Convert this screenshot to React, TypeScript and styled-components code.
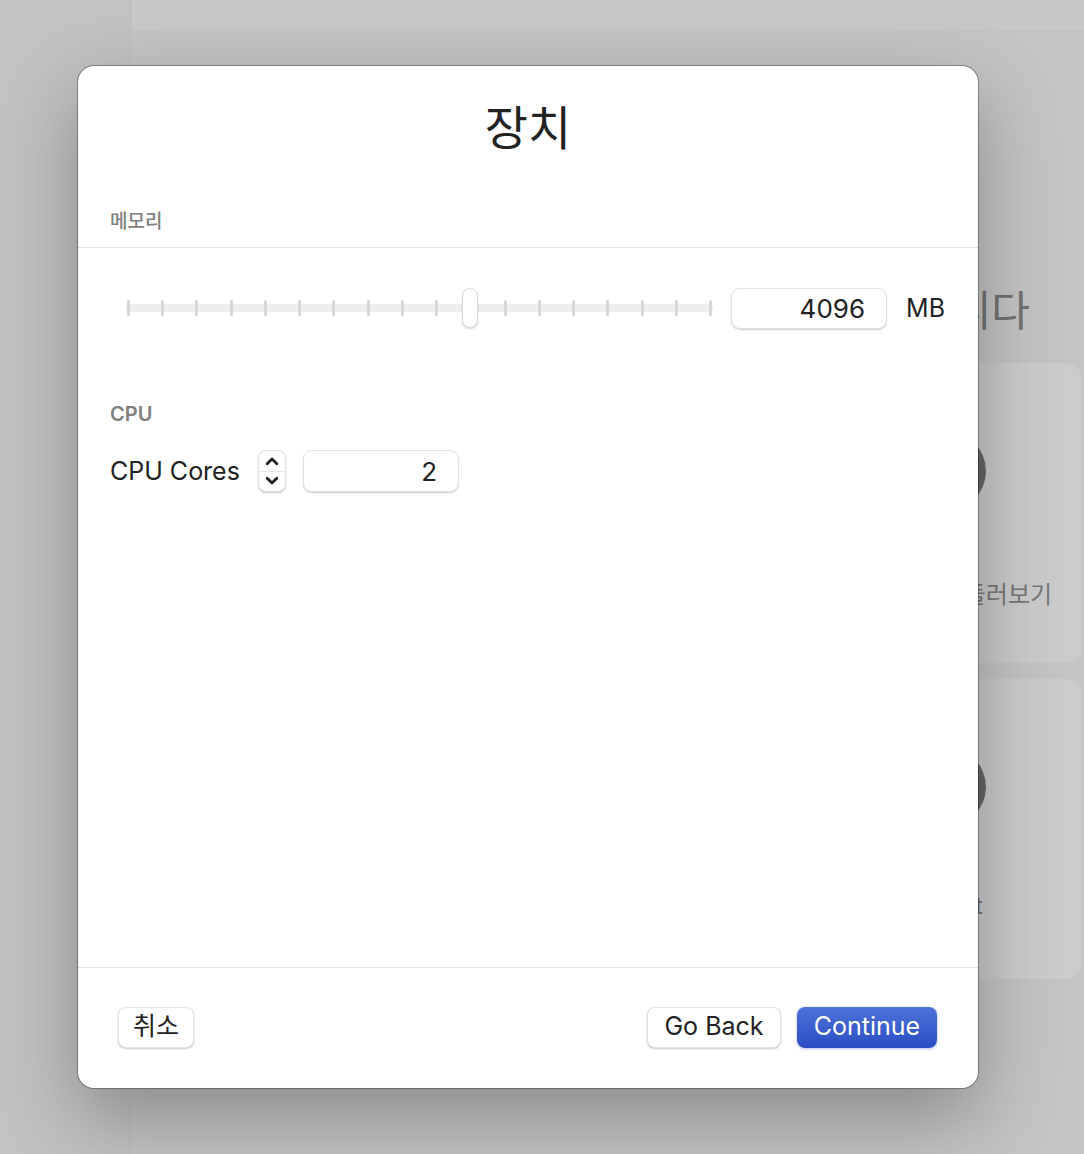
import React from "react";
import styled, { createGlobalStyle } from "styled-components";

const Global = createGlobalStyle`
  html, body { margin: 0; padding: 0; }
  body {
    width: 1084px;
    height: 1154px;
    overflow: hidden;
    font-family: Inter, "Noto Sans CJK KR", "Noto Sans", sans-serif;
    -webkit-font-smoothing: antialiased;
  }
`;

const Desktop = styled.div`
  position: relative;
  width: 1084px;
  height: 1154px;
  display: flex;
  background: #c4c4c4;
  overflow: hidden;
`;

const Sidebar = styled.div`
  width: 130px;
  flex: none;
  background: #c2c2c2;
  border-right: 1px solid #bdbcbe;
`;

const Main = styled.div`
  flex: 1;
  display: flex;
  flex-direction: column;
`;

const TopBar = styled.div`
  height: 30px;
  background: #c8c7c9;
  border-bottom: 1px solid #c2c1c3;
`;

const Content = styled.div`
  flex: 1;
  display: flex;
  flex-direction: column;
  align-items: flex-end;
  padding: 252px 2px 0 0;
`;

const BgHeading = styled.h1`
  margin: 0 52px 0 0;
  font-size: 42px;
  line-height: 56px;
  font-weight: 400;
  color: #727272;
  white-space: nowrap;
`;

const BgCards = styled.div`
  margin-top: 24px;
  display: flex;
  flex-direction: column;
  gap: 16px;
`;

const BgCard = styled.div`
  width: 272px;
  height: 300px;
  border-radius: 16px;
  background: #cbcbcb;
  display: flex;
  flex-direction: column;
  align-items: center;
  padding-top: 68px;
  box-sizing: border-box;
`;

const BgCircle = styled.div`
  width: 80px;
  height: 80px;
  border-radius: 50%;
  background: #676767;
`;

const BgLabel = styled.div`
  margin-top: 64px;
  font-size: 24px;
  color: #777;
  white-space: nowrap;
`;

const Dialog = styled.div`
  position: absolute;
  left: 78px;
  top: 66px;
  width: 900px;
  height: 1022px;
  box-sizing: border-box;
  background: #fff;
  border-radius: 16px;
  box-shadow: 0 0 0 1px rgba(0, 0, 0, 0.3), 0 30px 80px rgba(0, 0, 0, 0.3);
  display: flex;
  flex-direction: column;
  overflow: hidden;
`;

const Header = styled.div`
  padding: 34px 0 13px 32px;
  border-bottom: 1px solid #e1e1e1;
  display: flex;
  flex-direction: column;
`;

const Title = styled.h2`
  margin: 0 0 0 -32px;
  text-align: center;
  font-size: 47px;
  line-height: 56px;
  font-weight: 400;
  color: #222;
`;

const SectionLabel = styled.div<{ $top: number; $size: number; $weight: number }>`
  margin-top: ${(p) => p.$top}px;
  font-size: ${(p) => p.$size}px;
  line-height: 24px;
  font-weight: ${(p) => p.$weight};
  color: #808080;
`;

const Body = styled.div`
  flex: 1;
  padding: 39px 33px 0 32px;
  display: flex;
  flex-direction: column;
`;

const SliderRow = styled.div`
  display: flex;
  align-items: center;
  height: 42px;
`;

const Slider = styled.div`
  position: relative;
  width: 588px;
  height: 42px;
  margin-left: 16px;
  margin-right: 18px;
`;

const Track = styled.div`
  position: absolute;
  left: 0;
  right: 0;
  top: 17px;
  height: 8px;
  border-radius: 4px;
  background: #eeeeee;
`;

const Ticks = styled.div`
  position: absolute;
  left: 1px;
  right: 1px;
  top: 13px;
  display: flex;
  justify-content: space-between;
`;

const Tick = styled.div`
  width: 3px;
  height: 16px;
  border-radius: 2px;
  background: #d6d6d6;
`;

const Thumb = styled.div`
  position: absolute;
  top: 1px;
  width: 16px;
  height: 40px;
  margin-left: -8px;
  box-sizing: border-box;
  border-radius: 8px;
  background: #fff;
  border: 1px solid #dcdcdc;
  box-shadow: 0 1px 2px rgba(0, 0, 0, 0.18);
`;

const NumberField = styled.div<{ $h: number }>`
  width: 156px;
  height: ${(p) => p.$h}px;
  box-sizing: border-box;
  border-radius: 9px;
  border: 1px solid #e2e2e2;
  box-shadow: 0 1px 1.5px rgba(0, 0, 0, 0.2);
  background: #fff;
  display: flex;
  align-items: center;
  justify-content: flex-end;
  padding-right: 21px;
  font-size: 26px;
  color: #222;
`;

const Unit = styled.span`
  margin-left: 19px;
  font-size: 25px;
  color: #222;
`;

const CoresRow = styled.div`
  margin-top: 24px;
  display: flex;
  align-items: center;
  height: 42px;
`;

const FieldLabel = styled.span`
  font-size: 25px;
  color: #222;
  width: 148px;
`;

const Stepper = styled.div`
  width: 28px;
  height: 42px;
  box-sizing: border-box;
  border-radius: 8px;
  border: 1px solid #e0e0e0;
  box-shadow: 0 1px 1.5px rgba(0, 0, 0, 0.2);
  background: #fff;
  display: flex;
  flex-direction: column;
  margin-right: 17px;
`;

const StepHalf = styled.div<{ $top?: boolean }>`
  flex: 1;
  display: flex;
  align-items: center;
  justify-content: center;
  border-bottom: ${(p) => (p.$top ? "1px solid #e4e4e4" : "none")};
`;

const Footer = styled.div`
  height: 121px;
  border-top: 1px solid #e1e1e1;
  display: flex;
  align-items: flex-start;
  padding: 39px 41px 0 40px;
  box-sizing: border-box;
  gap: 16px;
`;

const Spacer = styled.div`
  flex: 1;
`;

const Button = styled.button<{ $primary?: boolean; $w: number }>`
  width: ${(p) => p.$w}px;
  height: 41px;
  border-radius: 8px;
  font-family: inherit;
  font-size: 25px;
  line-height: 1;
  padding: 0 0 2px;
  cursor: default;
  ${(p) =>
    p.$primary
      ? `
    background: linear-gradient(#4d72d9, #2a4dc3);
    color: #fff;
    border: none;
    box-shadow: 0 1px 3px rgba(40, 70, 190, 0.35);
  `
      : `
    background: #fff;
    color: #222;
    border: 1px solid #e0e0e0;
    box-shadow: 0 1px 2px rgba(0, 0, 0, 0.22);
  `}
`;

const Chevron = ({ up }: { up?: boolean }) => (
  <svg width="14" height="10" viewBox="0 0 14 10">
    <path
      d={up ? "M2.2 7.8 L7 3 L11.8 7.8" : "M2.2 2.2 L7 7 L11.8 2.2"}
      fill="none"
      stroke="#1e1e1e"
      strokeWidth="2.8"
      strokeLinecap="round"
      strokeLinejoin="round"
    />
  </svg>
);

const TICKS = 18;
const value = 4096;
const thumbPct = (344 / 588) * 100;

export default function App() {
  return (
    <>
      <Global />
      <Desktop>
        <Sidebar />
        <Main>
          <TopBar />
          <Content>
            <BgHeading>시작합니다</BgHeading>
            <BgCards>
              <BgCard>
                <BgCircle />
                <BgLabel>새로운 기능 둘러보기</BgLabel>
              </BgCard>
              <BgCard>
                <BgCircle />
                <BgLabel>Import</BgLabel>
              </BgCard>
            </BgCards>
          </Content>
        </Main>
        <Dialog>
          <Header>
            <Title>장치</Title>
            <SectionLabel $top={54} $size={19} $weight={500}>
              메모리
            </SectionLabel>
          </Header>
          <Body>
            <SliderRow>
              <Slider>
                <Track />
                <Ticks>
                  {Array.from({ length: TICKS }).map((_, i) => (
                    <Tick key={i} />
                  ))}
                </Ticks>
                <Thumb style={{ left: `${thumbPct}%` }} />
              </Slider>
              <NumberField $h={41}>{value}</NumberField>
              <Unit>MB</Unit>
            </SliderRow>
            <SectionLabel $top={73} $size={20} $weight={600}>
              CPU
            </SectionLabel>
            <CoresRow>
              <FieldLabel>CPU Cores</FieldLabel>
              <Stepper>
                <StepHalf $top>
                  <Chevron up />
                </StepHalf>
                <StepHalf>
                  <Chevron />
                </StepHalf>
              </Stepper>
              <NumberField $h={42}>2</NumberField>
            </CoresRow>
          </Body>
          <Footer>
            <Button $w={76}>취소</Button>
            <Spacer />
            <Button $w={134}>Go Back</Button>
            <Button $w={140} $primary>
              Continue
            </Button>
          </Footer>
        </Dialog>
      </Desktop>
    </>
  );
}
